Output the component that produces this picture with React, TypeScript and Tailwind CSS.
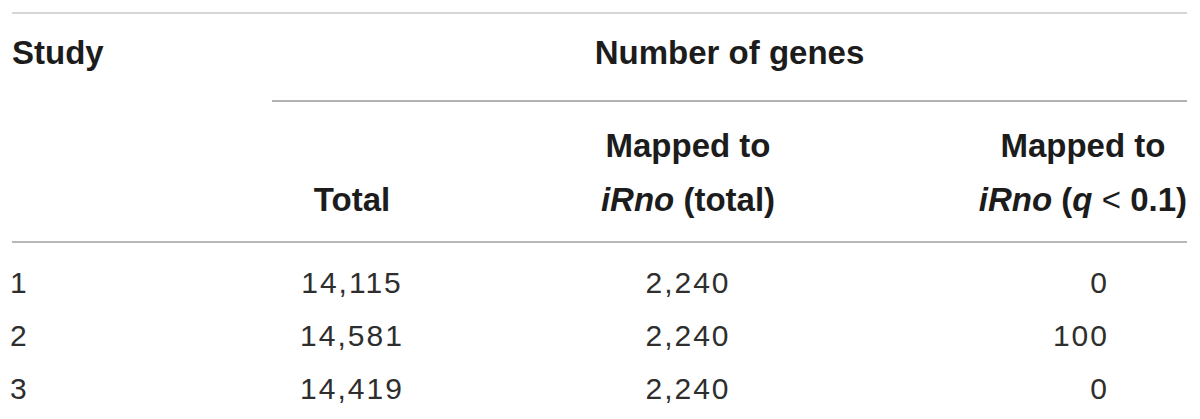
import React from "react";

const rows = [
  { study: "1", total: "14,115", mapped: "2,240", q: "0" },
  { study: "2", total: "14,581", mapped: "2,240", q: "100" },
  { study: "3", total: "14,419", mapped: "2,240", q: "0" },
];

export default function App() {
  return (
    <div className="w-[1200px] h-[419px] bg-white overflow-hidden font-['Liberation_Sans',Arial,sans-serif]">
      <div className="ml-[12px] mt-[12px] w-[1175px] border-t-2 border-[#d6d6d6]">
        {/* Header */}
        <div className="grid grid-cols-[260px_160px_512px_243px] border-b-2 border-[#b8b8b8] text-[33px] font-bold text-[#1c1c1c]">
          <div className="row-span-2 pt-[22px] leading-[33px]">Study</div>
          <div className="col-span-3 pt-[22px] pb-[31px] leading-[33px] text-center border-b-2 border-[#b3b3b3]">
            Number of genes
          </div>
          <div className="flex items-end justify-center pb-[14px] leading-[54px]">Total</div>
          <div className="pt-[17px] pb-[14px] leading-[54px] text-center">
            <div>Mapped to</div>
            <div>
              <span className="italic">iRno</span> (total)
            </div>
          </div>
          <div className="pt-[17px] pb-[14px] leading-[54px] text-right">
            <div className="inline-block text-center">
              <div>Mapped to</div>
              <div className="whitespace-nowrap">
                <span className="italic">iRno</span> (<span className="italic">q</span>
                <span className="font-normal"> &lt; </span>0.1)
              </div>
            </div>
          </div>
        </div>
        {/* Body */}
        <div className="pt-[13px] text-[30px] leading-[53px] tracking-[2px] text-[#2e2e2e]">
          {rows.map((r) => (
            <div key={r.study} className="grid grid-cols-[260px_160px_512px_243px]">
              <div className="-ml-[2px]">{r.study}</div>
              <div className="text-center">{r.total}</div>
              <div className="text-center">{r.mapped}</div>
              <div className="text-right pr-[78px]">{r.q}</div>
            </div>
          ))}
        </div>
      </div>
    </div>
  );
}
